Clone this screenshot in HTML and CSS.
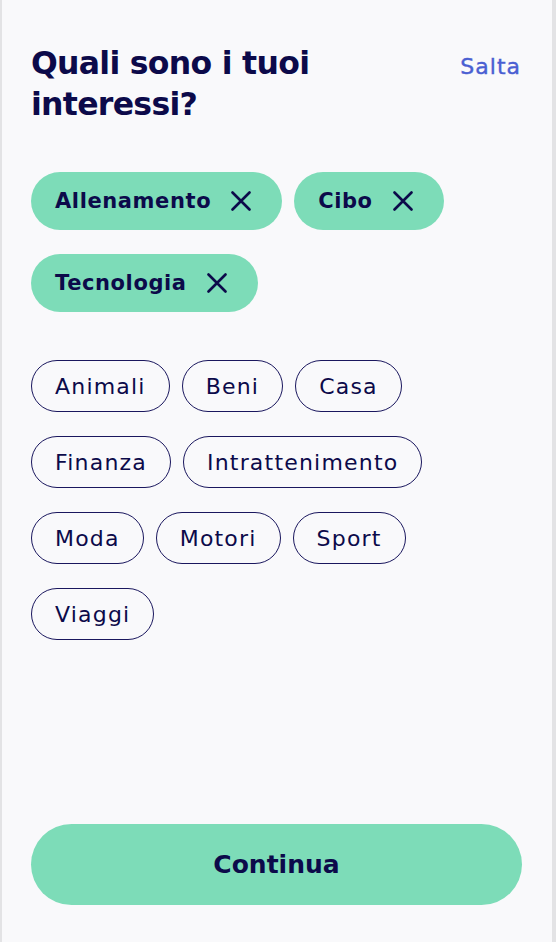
FILE: index.html
```html
<!DOCTYPE html>
<html lang="it">
<head>
<meta charset="utf-8">
<title>Interessi</title>
<link rel="stylesheet" href="styles.css">
</head>
<body>
<div class="screen">
  <header class="top">
    <h1 class="title">Quali sono i tuoi interessi?</h1>
    <a class="skip" href="#">Salta</a>
  </header>

  <div class="selected">
    <button class="chip chip-on">Allenamento<svg class="x" viewBox="0 0 20 20"><path d="M1.5 1.5L18.5 18.5M18.5 1.5L1.5 18.5"/></svg></button>
    <button class="chip chip-on">Cibo<svg class="x" viewBox="0 0 20 20"><path d="M1.5 1.5L18.5 18.5M18.5 1.5L1.5 18.5"/></svg></button>
    <button class="chip chip-on">Tecnologia<svg class="x" viewBox="0 0 20 20"><path d="M1.5 1.5L18.5 18.5M18.5 1.5L1.5 18.5"/></svg></button>
  </div>

  <div class="options">
    <button class="chip chip-off">Animali</button>
    <button class="chip chip-off">Beni</button>
    <button class="chip chip-off">Casa</button>
    <button class="chip chip-off">Finanza</button>
    <button class="chip chip-off">Intrattenimento</button>
    <button class="chip chip-off">Moda</button>
    <button class="chip chip-off">Motori</button>
    <button class="chip chip-off">Sport</button>
    <button class="chip chip-off">Viaggi</button>
  </div>

  <button class="continue">Continua</button>
</div>
</body>
</html>
```

FILE: styles.css
```css
* { box-sizing: border-box; }
html, body { margin: 0; padding: 0; }
body {
  background: #f9f9fb;
  font-family: "DejaVu Sans", "Noto Sans", sans-serif;
  color: #0c0a4a;
}
.screen {
  min-height: 942px;
  border-left: 2px solid #e3e3e5;
  border-right: 4px solid #e3e3e5;
  padding: 43px 30px 37px 29px;
  display: flex;
  flex-direction: column;
}
.top {
  display: flex;
  justify-content: space-between;
  align-items: baseline;
}
.title {
  margin: 0;
  max-width: 300px;
  font-size: 31.5px;
  line-height: 41px;
  font-weight: 700;
  letter-spacing: -0.7px;
  color: #0c0a4a;
}
.skip {
  font-size: 22px;
  font-weight: 400;
  letter-spacing: 1px;
  color: #4a5fd2;
  text-decoration: none;
  margin-right: 1px;
  -webkit-text-stroke: 0.4px #4a5fd2;
}
.selected {
  margin-top: 47px;
  display: flex;
  flex-wrap: wrap;
  gap: 24px 12px;
}
.options {
  margin-top: 48px;
  display: flex;
  flex-wrap: wrap;
  gap: 24px 12px;
}
.chip {
  font-family: inherit;
  color: #0c0a4a;
  display: inline-flex;
  align-items: center;
  border-radius: 999px;
  cursor: pointer;
}
.chip-on {
  height: 58px;
  background: #7ddcb8;
  border: none;
  padding: 0 31px 0 24px;
  font-size: 21px;
  font-weight: 700;
  letter-spacing: 0.6px;
}
.x {
  width: 20px;
  height: 20px;
  margin-left: 20px;
  fill: none;
  stroke: #0c0a4a;
  stroke-width: 2.6;
  stroke-linecap: round;
}
.chip-off {
  height: 52px;
  background: transparent;
  border: 1.6px solid #1a175e;
  padding: 0 23px;
  font-size: 22px;
  font-weight: 400;
  letter-spacing: 1.2px;
}
.continue {
  margin-top: auto;
  height: 81px;
  width: 100%;
  border: none;
  border-radius: 999px;
  background: #7ddcb8;
  font-family: inherit;
  font-size: 25px;
  font-weight: 700;
  color: #0c0a4a;
  cursor: pointer;
}
```
